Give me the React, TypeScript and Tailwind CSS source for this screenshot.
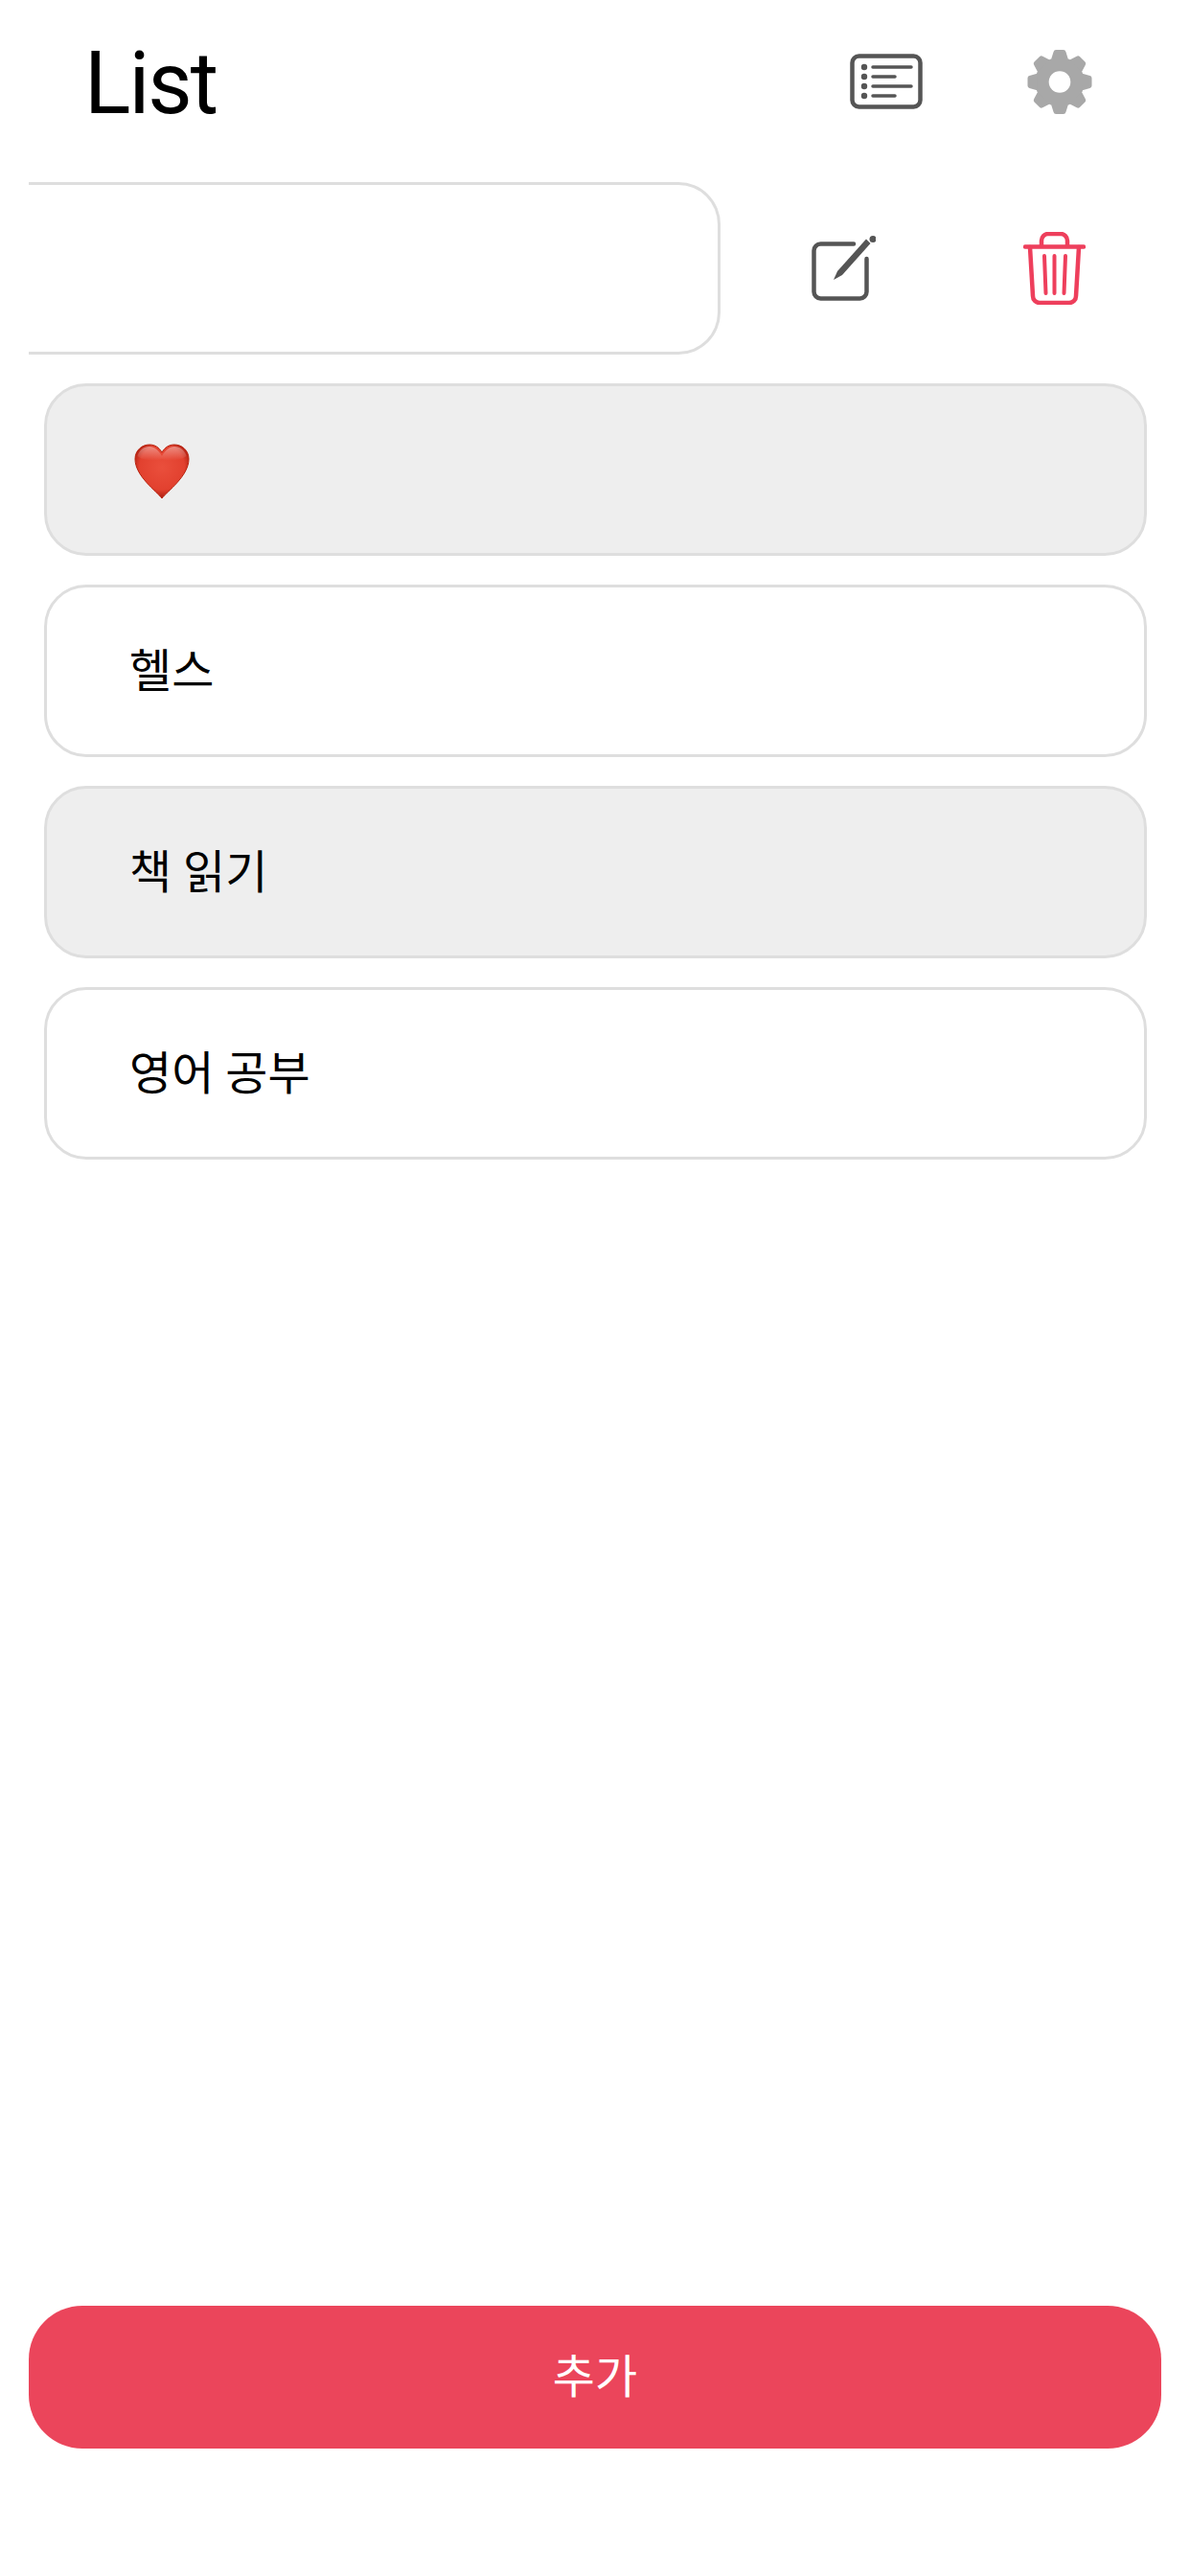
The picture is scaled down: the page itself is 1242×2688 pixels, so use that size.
const rowBase =
  "flex h-[180px] items-center rounded-[44px] border-[3px] border-[#dedede] pl-[86px] pt-[2px] text-[48px] leading-none text-black";

function ListIcon() {
  return (
    <svg width="76" height="58" viewBox="0 0 76 58" fill="none" stroke="#555555" strokeLinecap="round">
      <rect x="2.500" y="2.500" width="71" height="53" rx="7" strokeWidth="4.500" />
      <path d="M24 14h40M24 24h23M24 34h40M24 44h23" strokeWidth="3.500" />
      <g fill="#555555" stroke="none">
        <circle cx="15" cy="14" r="3.200" />
        <circle cx="15" cy="24" r="3.200" />
        <circle cx="15" cy="34" r="3.200" />
        <circle cx="15" cy="44" r="3.200" />
      </g>
    </svg>
  );
}

function GearIcon() {
  return (
    <svg width="68" height="67" viewBox="-34 -34 68 68">
      <circle r="26" fill="#a8a8a8" />
      {[0, 45, 90, 135, 180, 225, 270, 315].map((deg) => (
        <path key={deg} d="M-9 -24 L-6.500 -32 Q-6 -34 -4 -34 H4 Q6 -34 6.500 -32 L9 -24 Z" fill="#a8a8a8" transform={`rotate(${deg})`} />
      ))}
      <circle r="11.500" fill="#ffffff" />
    </svg>
  );
}

function EditIcon() {
  return (
    <svg width="67" height="68" viewBox="0 0 67 68" fill="none" stroke="#555555" strokeLinecap="round" strokeLinejoin="round">
      <path d="M44 8.500H9.500a7 7 0 0 0-7 7v43a7 7 0 0 0 7 7h41a7 7 0 0 0 7-7V24" strokeWidth="4.500" />
      <path d="M23 46L27 37L57 3.500L61.500 8L32 41Z" fill="#555555" stroke="none" />
      <circle cx="64" cy="3.500" r="3.500" fill="#555555" stroke="none" />
    </svg>
  );
}

function TrashIcon() {
  return (
    <svg width="65" height="76" viewBox="0 0 65 76" fill="none" stroke="#ee3f5c" strokeLinecap="round" strokeLinejoin="round">
      <path d="M2 15.500h61" strokeWidth="4.500" />
      <path d="M19 14V9a7 7 0 0 1 7-7h13a7 7 0 0 1 7 7v5" strokeWidth="4.500" />
      <path d="M7 16l3 51a7 7 0 0 0 7 7h31a7 7 0 0 0 7-7l3-51" strokeWidth="4.500" />
      <path d="M22 25l1.500 39M32.500 25v39M44 25l-1.500 39" strokeWidth="4" />
    </svg>
  );
}

function HeartIcon() {
  return (
    <svg width="58" height="58" viewBox="0 0 58 58">
      <defs>
        <radialGradient id="heartFill" cx="50%" cy="42%" r="60%">
          <stop offset="0%" stopColor="#ea4f3c" />
          <stop offset="70%" stopColor="#e2412f" />
          <stop offset="100%" stopColor="#a3180b" />
        </radialGradient>
        <linearGradient id="heartShine" x1="0" y1="0" x2="0" y2="1">
          <stop offset="0%" stopColor="#ffffff" stopOpacity="0.4" />
          <stop offset="100%" stopColor="#ffffff" stopOpacity="0" />
        </linearGradient>
      </defs>
      <path d="M29 57C24 50 1 34 1 16 1 7 8 1 16 1c6 0 10 3 13 8 3-5 7-8 13-8 8 0 15 6 15 15 0 18-23 34-28 41z" fill="url(#heartFill)" stroke="#b8230f" strokeWidth="1" />
      <path d="M29 13C26 7 21 3 16 3 10 3 5 7 3.500 13c6 5 20 5 25.500 3 5.500 2 19.500 2 25.500-3C53 7 48 3 42 3c-5 0-10 4-13 10z" fill="url(#heartShine)" />
    </svg>
  );
}

export default function App() {
  return (
    <div className="flex h-[2688px] w-[1242px] flex-col overflow-hidden bg-white font-['Roboto','Noto_Sans_CJK_KR',sans-serif]">
      <header className="flex h-[190px] items-center pb-[20px] pl-[88px] pr-[102px]">
        <h1 className="pt-[6px] text-[90px] font-normal leading-none tracking-[-2px] text-black">List</h1>
        <div className="ml-auto flex items-center gap-[109px]">
          <ListIcon />
          <GearIcon />
        </div>
      </header>

      <div className="flex h-[180px] items-center pl-[30px]">
        <div className="h-full w-[722px] rounded-r-[44px] border-y-[3px] border-r-[3px] border-[#dedede]" />
        <div className="ml-[95px] flex items-center gap-[154px]">
          <EditIcon />
          <TrashIcon />
        </div>
      </div>

      <ul className="mt-[30px] flex flex-col gap-[30px] pl-[46px] pr-[45px]">
        <li className={`${rowBase} bg-[#eeeeee]`}>
          <span className="ml-[5px] mt-[1px] block">
            <HeartIcon />
          </span>
        </li>
        <li className={rowBase}>헬스</li>
        <li className={`${rowBase} bg-[#eeeeee]`}>책 읽기</li>
        <li className={rowBase}>영어 공부</li>
      </ul>

      <button className="mx-[30px] mb-[133px] mt-auto h-[149px] rounded-[56px] bg-[#eb455b] text-[48px] leading-none text-white">
        추가
      </button>
    </div>
  );
}
